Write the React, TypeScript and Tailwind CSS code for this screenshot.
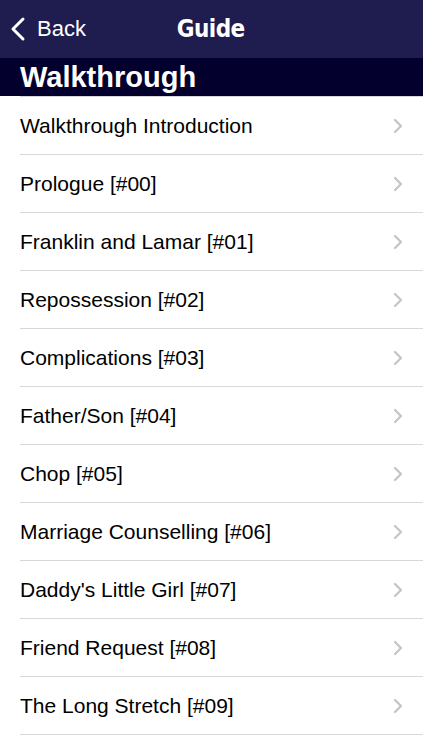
import React from 'react';

const items = [
  'Walkthrough Introduction',
  'Prologue [#00]',
  'Franklin and Lamar [#01]',
  'Repossession [#02]',
  'Complications [#03]',
  'Father/Son [#04]',
  'Chop [#05]',
  'Marriage Counselling [#06]',
  "Daddy's Little Girl [#07]",
  'Friend Request [#08]',
  'The Long Stretch [#09]',
];

const Chevron: React.FC = () => (
  <svg width="10" height="16" viewBox="0 0 10 16" fill="none">
    <path d="M2 2l6 6-6 6" stroke="#c4c4c9" strokeWidth="2.2" strokeLinecap="round" strokeLinejoin="round" />
  </svg>
);

export default function App() {
  return (
    <div className="w-[423px] h-[750px] overflow-hidden bg-white font-['Liberation_Sans',Arial,sans-serif]">
      <div className="h-[58px] bg-[#1f1c50] flex items-center relative">
        <div className="flex items-center pl-[10px] text-white">
          <svg width="16" height="26" viewBox="0 0 16 26" fill="none">
            <path d="M13 3L3 13l10 10" stroke="#fff" strokeWidth="3" strokeLinecap="round" strokeLinejoin="round" />
          </svg>
          <span className="ml-[11px] text-[22px] leading-none">Back</span>
        </div>
        <div className="absolute left-0 right-0 top-0 h-[58px] flex items-center justify-center pointer-events-none">
          <span className="ml-[-2px] text-white text-[24px] font-black tracking-tight font-['DejaVu_Sans',sans-serif] scale-x-90">Guide</span>
        </div>
      </div>
      <div className="h-[38px] bg-[#03002e] flex items-center pl-[20px]">
        <span className="text-white text-[29px] font-bold leading-none">Walkthrough</span>
      </div>
      <div className="ml-[20px] h-px bg-[#d8d8d8]" />
      <ul>
        {items.map((item) => (
          <li key={item} className="pl-[20px]">
            <div className="h-[58px] border-b border-[#d8d8d8] flex items-center justify-between pr-[20px]">
              <span className="text-[21px] text-black">{item}</span>
              <Chevron />
            </div>
          </li>
        ))}
      </ul>
    </div>
  );
}
